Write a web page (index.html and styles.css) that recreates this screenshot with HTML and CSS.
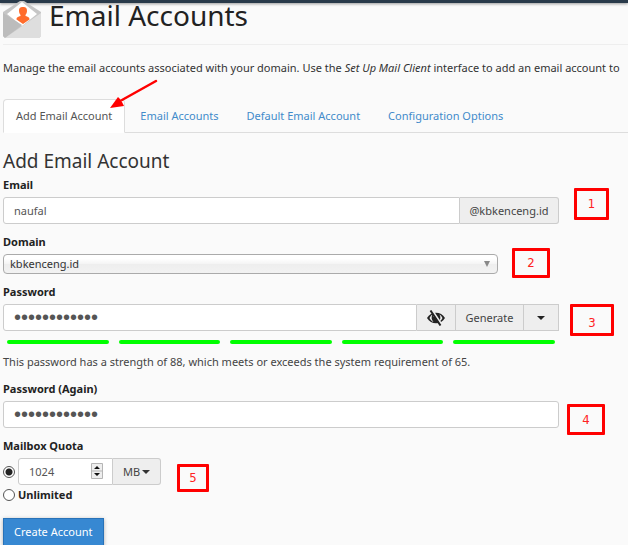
FILE: index.html
```
<!DOCTYPE html>
<html lang="en">
<head>
    <meta charset="UTF-8">
    <title>Email Accounts</title>
    <link rel="stylesheet" href="styles.css">
</head>
<body>
    <div class="topbar"></div>
    <main class="content">
        <header class="page-header">
            <svg class="page-icon" width="38" height="37" viewBox="0 0 38 37" aria-hidden="true">
                <path d="M0 11 L17 0 H21 L38 11 V35 L36 37 H2 L0 35 Z" fill="#c6c6c6"/>
                <path d="M4 13 L19 1 L34 13 L19 25 Z" fill="#fff"/>
                <path d="M0 12 L19 24 L2 37 L0 35 Z" fill="#bcbcbc"/>
                <path d="M38 12 V35 L36 37 H2 Z" fill="#dedede"/>
                <path d="M16 10 C16 7 17 6 20 6 C23 6 24 7 24 10 C24 12 23 13 22.500 14 V15 C25 16 26.500 16 26.500 18.500 L20 23 L13.500 18.500 C13.500 16 15 16 17.500 15 V14 C17 13 16 12 16 10 Z" fill="#ff6c2c"/>
            </svg>
            <h1>Email Accounts</h1>
        </header>
        <p class="intro">Manage the email accounts associated with your domain. Use the <em>Set Up Mail Client</em> interface to add an email account to</p>

        <nav class="tabs">
            <a class="tab active" href="#add">Add Email Account</a>
            <a class="tab" href="#accounts">Email Accounts</a>
            <a class="tab" href="#default">Default Email Account</a>
            <a class="tab" href="#options">Configuration Options</a>
            <svg class="arrow" width="50" height="32" viewBox="0 0 50 32" aria-hidden="true">
                <path d="M46 3 L12 22" stroke="#f00" stroke-width="2.500" stroke-linecap="round"/>
                <path d="M0 30 L8 19 L11 22 L14 28 Z" fill="#f00"/>
            </svg>
        </nav>

        <form id="add" class="account-form">
            <h2>Add Email Account</h2>

            <div class="form-group">
                <label for="email">Email</label>
                <div class="input-group">
                    <input type="text" id="email" name="email" value="naufal">
                    <span class="addon domain">@kbkenceng.id</span>
                </div>
                <span class="note note-1">1</span>
            </div>

            <div class="form-group">
                <label for="domain">Domain</label>
                <div class="select-wrap">
                    <select id="domain" name="domain">
                        <option>kbkenceng.id</option>
                    </select>
                    <svg class="select-arrow" width="6" height="6" viewBox="0 0 6 6" aria-hidden="true"><path d="M0 0 H6 L3 6 Z" fill="#888"/></svg>
                </div>
                <span class="note note-2">2</span>
            </div>

            <div class="form-group">
                <label for="password">Password</label>
                <div class="input-group square">
                    <input type="password" id="password" name="password" value="abcdefghijkl">
                    <button type="button" class="addon toggle" aria-label="Show password">
                        <svg width="18" height="16" viewBox="0 0 18 16" aria-hidden="true">
                            <path d="M0 8 C4 1 14 1 18 8 C14 15 4 15 0 8 Z" fill="#222"/>
                            <path d="M2.500 8 C3.500 6 4.500 5 5.500 4.500 C4 7 4.500 10 6.500 12 C5 11.500 3.500 10 2.500 8 Z M15.500 8 C14.500 6 13.500 5 12.500 4.500 C14 7 13.500 10 11.500 12 C13 11.500 14.500 10 15.500 8 Z" fill="#eee"/>
                            <path d="M6.500 7 C7 5.500 8 5 9 5" stroke="#eee" fill="none"/>
                            <path d="M5 0 L15 15" stroke="#eee" stroke-width="2"/>
                            <path d="M3.500 0.500 L13.500 15.500" stroke="#222" stroke-width="2"/>
                        </svg>
                    </button>
                    <button type="button" class="addon generate">Generate</button>
                    <button type="button" class="addon more" aria-label="Password options">
                        <svg width="8" height="4" viewBox="0 0 8 4" aria-hidden="true"><path d="M0 0 H8 L4 4 Z" fill="#222"/></svg>
                    </button>
                </div>
                <div class="strength">
                    <span></span><span></span><span></span><span></span><span></span>
                </div>
                <p class="strength-text">This password has a strength of 88, which meets or exceeds the system requirement of 65.</p>
                <span class="note note-3">3</span>
            </div>

            <div class="form-group">
                <label for="password2">Password (Again)</label>
                <div class="input-group">
                    <input type="password" id="password2" name="password2" value="abcdefghijkl">
                </div>
                <span class="note note-4">4</span>
            </div>

            <div class="form-group">
                <label for="quota">Mailbox Quota</label>
                <div class="quota-row">
                    <input type="radio" id="limited" name="quotaType" aria-label="Limited quota" checked>
                    <div class="input-group quota">
                        <input type="number" id="quota" name="quota" value="1024">
                        <svg class="spinner" width="12" height="16" viewBox="0 0 12 16" aria-hidden="true">
                            <path d="M0.500 0.500 H11.500 V15.500 H0.500 Z M0.500 8 H11.500" fill="#eee" stroke="#b5b5b5"/>
                            <path d="M3 6 L6 3 L9 6 Z M3 10 H9 L6 13 Z" fill="#111"/>
                        </svg>
                        <button type="button" class="addon unit">MB
                            <svg width="8" height="4" viewBox="0 0 8 4" aria-hidden="true"><path d="M0 0 H8 L4 4 Z" fill="#333"/></svg>
                        </button>
                    </div>
                </div>
                <div class="quota-row">
                    <input type="radio" id="unlimited" name="quotaType">
                    <label for="unlimited">Unlimited</label>
                </div>
                <span class="note note-5">5</span>
            </div>

            <button type="submit" class="submit">Create Account</button>
        </form>
    </main>
</body>
</html>
```

FILE: styles.css
```
* { box-sizing: border-box; }
body {
    margin: 0;
    background: #fafafa;
    color: #333;
    font: 11px/18px "Noto Sans", "Open Sans", sans-serif;
}
h1, h2, p { margin: 0; font-weight: normal; }
input, select, button { font: inherit; color: inherit; margin: 0; }

.topbar { height: 3px; background: #293a4a; box-shadow: 0 1px 3px rgba(0, 0, 0, 0.4); }
.content { padding: 0 0 0 3px; }

.page-header {
    display: flex;
    gap: 8px;
    height: 42px;
    border-bottom: 1px solid #eee;
}
.page-icon { flex: none; margin-top: -2px; }
h1 { font-size: 28px; line-height: 24px; color: #222; }
.intro { margin-top: 14px; white-space: nowrap; }

/* tabs */
.tabs {
    position: relative;
    display: flex;
    gap: 2px;
    margin-top: 22px;
    border-bottom: 1px solid #ddd;
}
.tab {
    padding: 7px 12px;
    margin-bottom: -1px;
    border: 1px solid transparent;
    border-radius: 4px 4px 0 0;
    color: #428bca;
    text-decoration: none;
}
.tab.active { background: #fff; border-color: #ddd #ddd #fff; color: #555; }
.arrow { position: absolute; left: 107px; top: -21px; fill: none; }

/* form */
.account-form { max-width: 556px; margin-top: 16px; }
h2 { font-size: 19px; line-height: 24px; margin-bottom: 3px; }
.form-group { position: relative; margin-bottom: 9px; }
label { display: block; font-weight: bold; color: #222; }
.form-group > label { margin-bottom: 3px; }

.input-group { position: relative; display: flex; height: 27px; }
.input-group input {
    flex: 1;
    min-width: 0;
    padding: 0 10px;
    background: #fff;
    border: 1px solid #ccc;
    border-radius: 3px;
    color: #555;
}
.input-group input:not(:last-child) { border-radius: 3px 0 0 3px; }
.input-group input[type="password"] { font: 20px "Liberation Sans", sans-serif; }
.addon {
    display: flex;
    align-items: center;
    justify-content: center;
    gap: 2px;
    padding: 0 9px;
    background: #eee;
    border: 1px solid #ccc;
    border-left: 0;
    color: #444;
}
.addon:last-child { border-radius: 0 3px 3px 0; }
.square .addon, .square input { border-radius: 0; }
.domain { width: 99px; }
.toggle { width: 39px; }
.generate { width: 68px; }
.more { width: 35px; }

.select-wrap { position: relative; width: 89%; }
select {
    display: block;
    width: 100%;
    height: 20px;
    padding: 0 6px;
    appearance: none;
    background: linear-gradient(#fff 20%, #f4f4f4 50%, #eee 52%, #f2f2f2);
    border: 1px solid #aaa;
    border-radius: 4px;
}
.select-arrow { position: absolute; right: 8px; top: 7px; pointer-events: none; }

.strength { display: flex; gap: 10px; padding: 9px 4px; }
.strength span { flex: 1; height: 4px; border-radius: 2px; background: #0f0; }
.strength-text { margin-bottom: 5px; color: #444; }

/* quota */
.quota-row { display: flex; align-items: center; gap: 3px; }
.quota-row + .quota-row { margin-top: 1px; }
.quota { width: 143px; }
.quota input { appearance: textfield; }
.quota input::-webkit-inner-spin-button { appearance: none; }
.spinner { position: absolute; right: 58px; top: 5px; pointer-events: none; }
.unit { width: 48px; }
input[type="radio"] {
    width: 12px;
    height: 12px;
    appearance: none;
    background: #fff;
    border: 1px solid #555;
    border-radius: 50%;
}
input[type="radio"]:checked { background: radial-gradient(#222 0 3px, #fff 4px); }

.submit {
    height: 28px;
    margin-top: 5px;
    padding: 0 10px;
    background: #3788d2;
    border: 1px solid #2872b8;
    color: #fff;
    box-shadow: 0 1px 4px rgba(0, 0, 0, 0.3);
}

/* numbered callouts beside the fields */
.note {
    position: absolute;
    display: flex;
    align-items: center;
    justify-content: center;
    border: 3px solid #f00;
    border-radius: 1px;
    color: #f22;
    font: 13px/16px "DejaVu Sans Condensed", "DejaVu Sans", sans-serif;
}
.note-1 { left: 571px; top: 12px; width: 35px; height: 32px; }
.note-2 { left: 509px; top: 15px; width: 38px; height: 30px; }
.note-3 { left: 567px; top: 21px; width: 44px; height: 32px; padding-top: 6px; }
.note-4 { left: 564px; top: 24px; width: 38px; height: 31px; }
.note-5 { left: 174px; top: 27px; width: 32px; height: 28px; }
```
